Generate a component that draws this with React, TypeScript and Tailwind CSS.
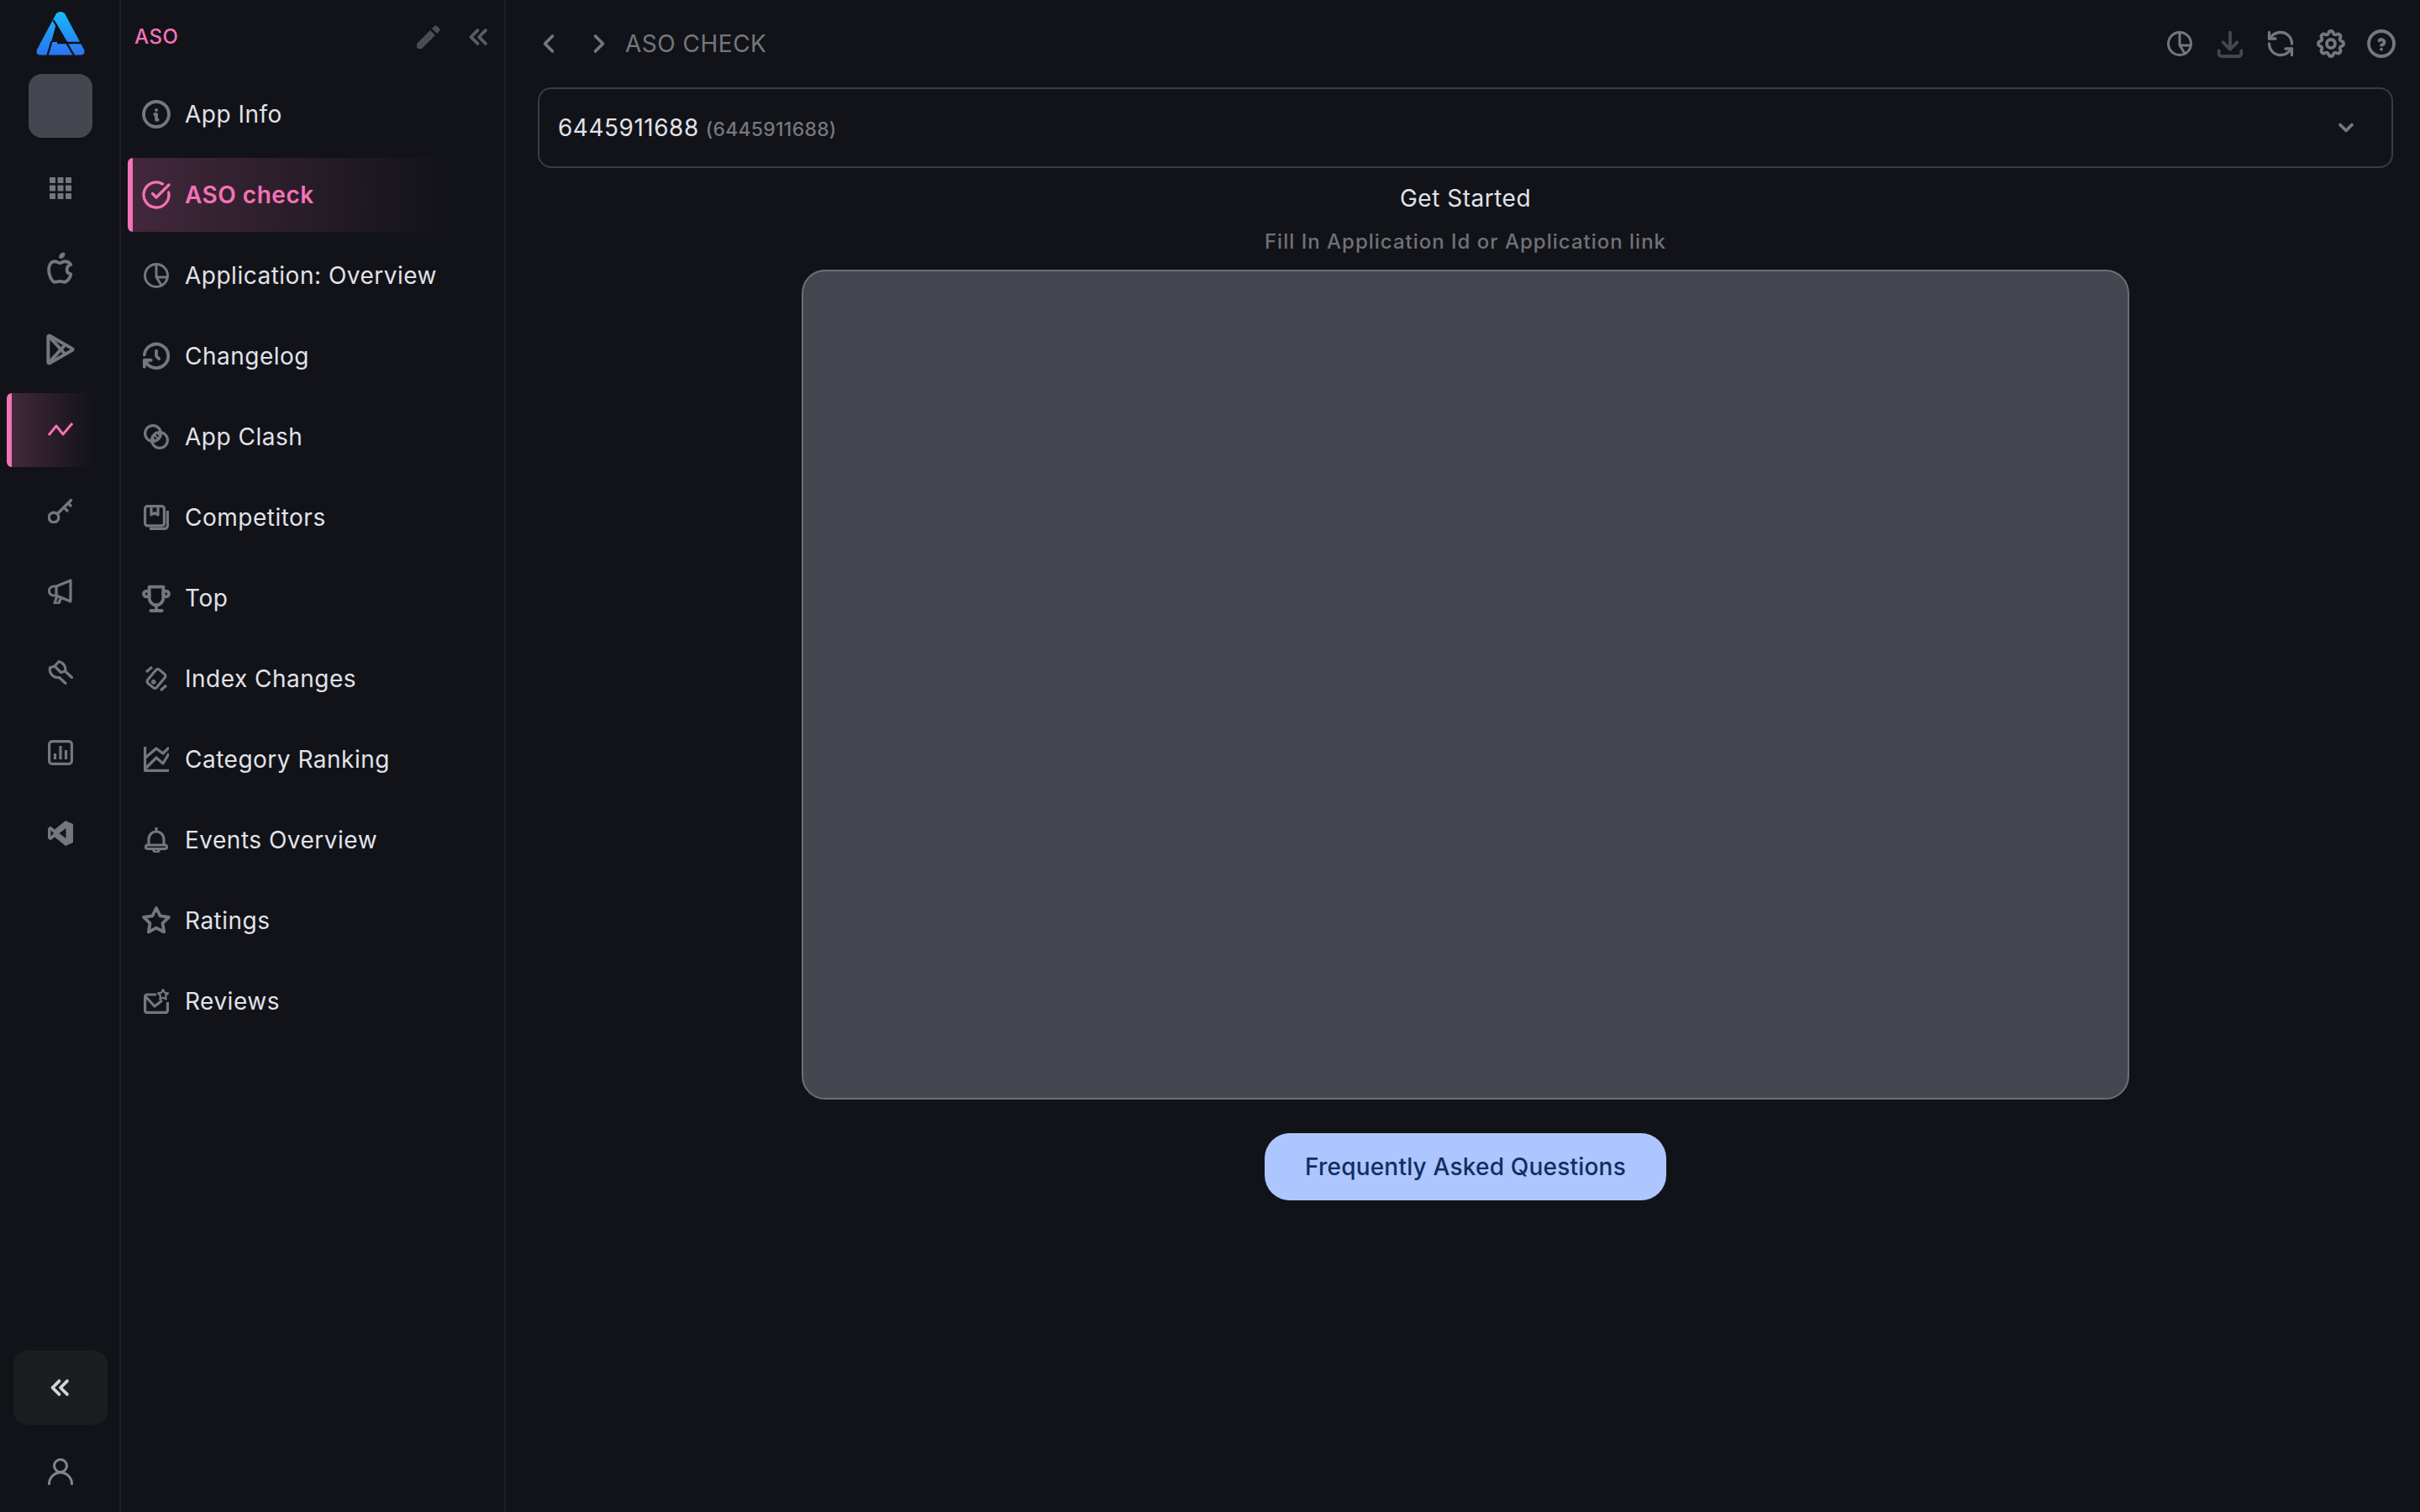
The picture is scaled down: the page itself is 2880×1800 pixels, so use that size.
import {
    TbBrandApple,
    TbBrandGooglePlay,
    TbChevronDown,
    TbChevronLeft,
    TbChevronRight,
    TbChevronsLeft,
    TbDownload,
    TbHelpCircle,
    TbHistory,
    TbInfoCircle,
    TbSettings,
    TbStar,
    TbTrophy,
} from "react-icons/tb";
import { CircleCheckBig, RefreshCcw } from "lucide-react";
import type { ReactNode } from "react";

const GRAY = "#76777c";

// 30x30 선 아이콘 공통
const Line = ({ children, color = GRAY, width = 3.2 }: { children: ReactNode; color?: string; width?: number }) => (
    <svg viewBox="0 0 30 30" className="w-[30px] h-[30px] shrink-0" fill="none" stroke={color} strokeWidth={width} strokeLinejoin="round">
        {children}
    </svg>
);

const GridIcon = () => (
    <svg viewBox="0 0 26 26" className="w-[26px] h-[26px]" fill={GRAY}>
        {[0, 9.5, 19].map((y) => [0, 9.5, 19].map((x) => (
            <rect key={`${x}-${y}`} x={x} y={y} width="7" height="7" rx="0.6" />
        )))}
    </svg>
);

const TrendIcon = () => (
    <Line color="#f472b6" width={3}>
        <polyline points="1,21 10,10 18,20 29,7" />
    </Line>
);

const KeyIcon = () => (
    <Line width={3.4}>
        <circle cx="7" cy="23" r="5.800" />
        <path d="M11 19 28.500 1.500M19 11l5 5M24 6l4 4" />
    </Line>
);

const MegaphoneIcon = () => (
    <Line>
        <path d="M27 2v25L10 20H7a5.500 5.500 0 0 1 0-11h3z" />
        <path d="M10 9v11M11 20l-3 9h5l3-7" />
    </Line>
);

const WrenchIcon = () => (
    <Line>
        <path d="M13 2.500a9.500 9.500 0 0 1 7.500 11.500l8 7.500" strokeLinecap="round" />
        <path d="M2.500 10a9.500 9.500 0 0 0 11 11.500l7.500 7" strokeLinecap="round" />
        <path d="M13 2.500 8 8l7.500 7.500 5-1.500M2.500 10 8 8" />
    </Line>
);

const ReportIcon = () => (
    <Line>
        <rect x="1.600" y="1.600" width="26.800" height="26.800" rx="3.500" />
        <path d="M8.500 23v-7M15 23V7M21.500 23V12" />
    </Line>
);

const VscodeIcon = () => (
    <svg viewBox="0 0 30 30" className="w-[30px] h-[30px]" fill={GRAY} fillRule="evenodd">
        <path d="M21 0 30 4V26L21 30 8 19.500 3 23.500 0 21V9L3 6.500 8 10.500ZM21.500 9 13.500 15 21.500 21ZM3.500 11.500V18.500L7 15Z" />
    </svg>
);

const ClashIcon = () => (
    <Line>
        <circle cx="11" cy="11" r="9.400" />
        <circle cx="19" cy="19" r="9.400" />
        <path d="M12 12l6 6M17 11l2 3M11 16l2 3" strokeWidth="2" />
    </Line>
);

const CompetitorsIcon = () => (
    <Line>
        <rect x="1.600" y="1.600" width="22.800" height="23.300" rx="3" />
        <path d="M9 2v10l4-2.500 4 2.500V2" />
        <path d="M28.400 7v18a4 4 0 0 1-4 3.400H7" />
    </Line>
);

const IndexIcon = () => (
    <Line>
        <g transform="rotate(40 15 15)">
            <rect x="8" y="4.500" width="14" height="21" rx="3" />
            <circle cx="15" cy="20" r="1.200" />
        </g>
        <path d="M3 7l7-6M20 29l7-6" />
    </Line>
);

const RankIcon = () => (
    <Line>
        <path d="M1.600 0V28.400H30" />
        <path d="M2 13 15 2l8 6 7-7M2 26 15 13l8 7 7-12" />
    </Line>
);

const BellIcon = () => (
    <Line>
        <path d="M15 0v4M6 21v-7a9 9 0 0 1 18 0v7" />
        <rect x="2.500" y="21" width="25" height="4.500" rx="2.200" />
        <path d="M11.500 26a3.500 3.500 0 0 0 7 0" />
    </Line>
);

const ReviewsIcon = () => (
    <Line>
        <path d="M15 7H4a2.700 2.700 0 0 0-2.400 2.700V26A2.700 2.700 0 0 0 4 28.400h22a2.700 2.700 0 0 0 2.400-2.400V16" />
        <path d="M2 9l11 12 9-7" />
        <path d="M23 1l1.900 3.800 4.100.6-3 3 .7 4.200-3.700-2-3.700 2 .7-4.200-3-3 4.100-.6z" strokeWidth="2.200" />
    </Line>
);

const PieIcon = ({ color = GRAY }: { color?: string }) => (
    <Line color={color} width={3}>
        <circle cx="15" cy="15" r="13.500" />
        <path d="M15 1.500V17H28.500M15 17l7 11" />
    </Line>
);

const PencilIcon = () => (
    <svg viewBox="0 0 28 28" className="w-[28px] h-[28px]" fill="#4a4c52">
        <path d="M0 22 16 6l6 6L6 28H2a2 2 0 0 1-2-2z" />
        <path d="M18 4l3-3a2 2 0 0 1 3 0l3 3a2 2 0 0 1 0 3l-3 3z" />
    </svg>
);

const Logo = () => (
    <svg viewBox="0 0 58 53" className="w-[58px] h-[53px]">
        <defs>
            <linearGradient id="logoBlue" x1="0" y1="0" x2="0" y2="1">
                <stop offset="0" stopColor="#1ab8f8" />
                <stop offset="1" stopColor="#2a74f2" />
            </linearGradient>
        </defs>
        <path fill="url(#logoBlue)" d="M24 3Q29-1 34 3L57 46Q59 52 53 52.500H5Q-1 52 1 46Z" />
        <path fill="#111318" d="M24 15 37 37H18Z" />
        <path fill="none" stroke="#111318" strokeWidth="2.400" d="M20.500 11 45 53M18.500 36 13.500 53M25 38H56" />
    </svg>
);

const menuIcon = "text-[40px] shrink-0 text-[#76777c]";

const railList: { key: string; icon: ReactNode; active?: boolean }[] = [
    { key: "grid", icon: <GridIcon /> },
    { key: "apple", icon: <TbBrandApple className="text-[42px] shrink-0 text-[#76777c]" strokeWidth={2.2} /> },
    { key: "play", icon: <TbBrandGooglePlay className="text-[44px] shrink-0 text-[#76777c]" strokeWidth={2.2} /> },
    { key: "aso", icon: <TrendIcon />, active: true },
    { key: "keyword", icon: <KeyIcon /> },
    { key: "ads", icon: <MegaphoneIcon /> },
    { key: "tools", icon: <WrenchIcon /> },
    { key: "report", icon: <ReportIcon /> },
    { key: "vscode", icon: <VscodeIcon /> },
];

const menuList: { label: string; icon: ReactNode; active?: boolean }[] = [
    { label: "App Info", icon: <TbInfoCircle className={menuIcon} strokeWidth={2.3} /> },
    { label: "ASO check", icon: <CircleCheckBig size={36} strokeWidth={2.2} className="shrink-0 text-[#f472b6]" />, active: true },
    { label: "Application: Overview", icon: <PieIcon /> },
    { label: "Changelog", icon: <TbHistory className="text-[38px] shrink-0 text-[#76777c]" strokeWidth={2.4} /> },
    { label: "App Clash", icon: <ClashIcon /> },
    { label: "Competitors", icon: <CompetitorsIcon /> },
    { label: "Top", icon: <TbTrophy className={menuIcon} strokeWidth={2.3} /> },
    { label: "Index Changes", icon: <IndexIcon /> },
    { label: "Category Ranking", icon: <RankIcon /> },
    { label: "Events Overview", icon: <BellIcon /> },
    { label: "Ratings", icon: <TbStar className="text-[36px] shrink-0 text-[#76777c]" strokeWidth={2.5} /> },
    { label: "Reviews", icon: <ReviewsIcon /> },
];

export default function App() {
    return (
        <div className="flex w-[2880px] h-[1800px] overflow-hidden bg-[#111318] font-['Inter',sans-serif] text-[#e2e2e9]">
            {/* 왼쪽 레일 */}
            <aside className="flex flex-col items-center w-[144px] shrink-0 h-full shadow-[inset_-2px_0_0_#1e2025]">
                <div className="mt-[13px] h-[53px]"><Logo /></div>
                <div className="mt-[22px] w-[76px] h-[76px] rounded-[16px] bg-[#44474f]" />
                <ul className="mt-[12px] w-full">
                    {railList.map((item) => (
                        <li key={item.key} className={`h-[96px] flex items-center ${item.active ? "pl-[8px]" : "justify-center"}`}>
                            {item.active ? (
                                <span className="flex items-center w-[104px] h-[88px] pl-[43px] border-l-[6px] border-[#f472b6] rounded-l-[6px] bg-gradient-to-r from-[#f472b638] to-transparent">
                                    {item.icon}
                                </span>
                            ) : item.icon}
                        </li>
                    ))}
                </ul>
                <div className="mt-auto flex items-center justify-center w-[112px] h-[88px] rounded-[16px] bg-[#1c1d21]">
                    <TbChevronsLeft className="text-[38px] text-[#d3d4da]" strokeWidth={2.4} />
                </div>
                <div className="flex items-center justify-center h-[104px] pt-[7px]">
                    <svg viewBox="0 0 30 32" className="w-[30px] h-[32px]" fill="none" stroke="#85868b" strokeWidth="3" strokeLinecap="round">
                        <circle cx="15" cy="9" r="7.500" />
                        <path d="M1.500 30.500a13.500 13.500 0 0 1 27 0" />
                    </svg>
                </div>
            </aside>

            {/* 메뉴 */}
            <nav className="w-[458px] shrink-0 h-full border-r-2 border-[#1e2025]">
                <div className="flex items-center h-[88px] pl-[16px] pr-[11px]">
                    <span className="text-[24px] font-medium tracking-[0.5px] text-[#f472b6]">ASO</span>
                    <span className="ml-auto"><PencilIcon /></span>
                    <TbChevronsLeft className="ml-[27px] text-[38px] text-[#5a5c62]" strokeWidth={2.4} />
                </div>
                <ul className="pl-[8px]">
                    {menuList.map((item) => (
                        <li key={item.label} className="h-[96px] flex items-center">
                            <div className={`flex items-center w-[385px] h-[88px] rounded-l-[6px] ${item.active ? "border-l-[6px] border-[#f472b6] pl-[12px] bg-gradient-to-r from-[#f472b638] to-transparent" : "pl-[18px]"}`}>
                                <span className="flex items-center justify-center w-[32px] h-[32px]">{item.icon}</span>
                                <span className={`ml-[18px] text-[28px] tracking-[0.5px] whitespace-nowrap ${item.active ? "font-semibold text-[#f472b6]" : "text-[#e2e2e9]"}`}>{item.label}</span>
                            </div>
                        </li>
                    ))}
                </ul>
            </nav>

            {/* 본문 */}
            <main className="flex-1 flex flex-col items-center pl-[38px] pr-[32px]">
                <header className="flex items-center w-full h-[104px]">
                    <TbChevronLeft className="text-[36px] text-[#76777c] ml-[-5px]" strokeWidth={2.4} />
                    <TbChevronRight className="text-[36px] text-[#76777c] ml-[24px]" strokeWidth={2.4} />
                    <span className="ml-[13px] text-[28px] tracking-[0.5px] text-[#76777c]">ASO CHECK</span>
                    <div className="ml-auto mr-[-6px] flex items-center gap-[20px]">
                        <span className="flex items-center justify-center w-[40px] h-[40px]"><PieIcon /></span>
                        <TbDownload className="text-[40px] text-[#44474f]" strokeWidth={2.3} />
                        <span className="flex items-center justify-center w-[40px] h-[40px]"><RefreshCcw size={36} strokeWidth={2.2} className="shrink-0 text-[#76777c]" /></span>
                        <TbSettings className="text-[40px] text-[#76777c]" strokeWidth={2.3} />
                        <TbHelpCircle className="text-[40px] text-[#76777c]" strokeWidth={2.3} />
                    </div>
                </header>
                <div className="flex items-center w-full h-[96px] px-[22px] rounded-[16px] border-2 border-[#3a3c43]">
                    <span className="flex items-baseline">
                        <span className="text-[28px] tracking-[0.5px]">6445911688</span>
                        <span className="ml-[8px] text-[23px] font-medium tracking-[0.25px] text-[#76777c]">(6445911688)</span>
                    </span>
                    <TbChevronDown className="ml-auto mr-[18px] text-[28px] text-[#76777c]" strokeWidth={3.2} />
                </div>
                <h2 className="mt-[16px] text-[28px] tracking-[0.5px] leading-[40px]">Get Started</h2>
                <p className="mt-[16px] text-[24px] leading-[32px] font-medium tracking-[1px] text-[#707278]">Fill In Application Id or Application link</p>
                <div className="mt-[17px] w-[1580px] h-[988px] shrink-0 rounded-[28px] border-2 border-[#6d6f75] bg-[#44474f]" />
                <button type="button" className="mt-[40px] w-[478px] h-[80px] shrink-0 rounded-[30px] bg-[#adc6ff] text-[#102f60] text-[28px] font-medium tracking-[0.2px]">
                    Frequently Asked Questions
                </button>
            </main>
        </div>
    );
}
